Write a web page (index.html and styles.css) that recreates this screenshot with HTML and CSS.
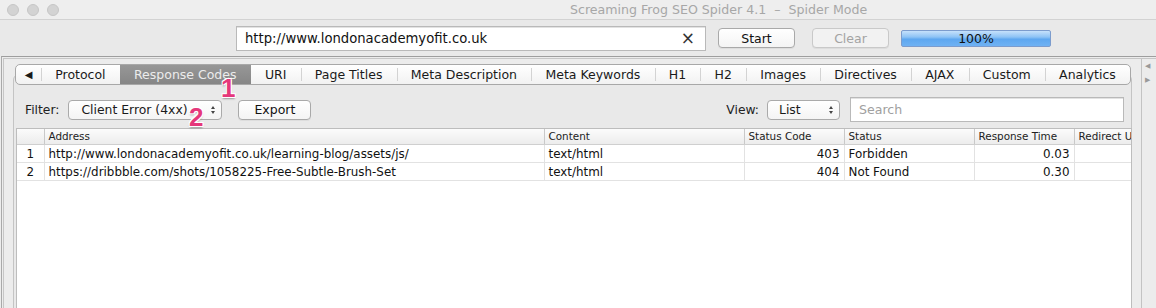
FILE: index.html
```html
<!DOCTYPE html>
<html>
<head>
<meta charset="utf-8">
<link rel="stylesheet" href="styles.css">
</head>
<body>
<div class="window">
  <div class="titlebar">
    <div class="lights">
      <span class="light"></span><span class="light"></span><span class="light"></span>
    </div>
    <div class="title">Screaming Frog SEO Spider 4.1 &nbsp;–&nbsp; Spider Mode</div>
  </div>
  <div class="toolbar">
    <div class="urlfield">
      <span class="url">http://www.londonacademyofit.co.uk</span>
      <span class="clearx">×</span>
    </div>
    <button class="btn start">Start</button>
    <button class="btn clear">Clear</button>
    <div class="progress">100%</div>
  </div>
  <div class="main">
    <div class="frame">
      <div class="content">
        <div class="tabbar">
          <div class="tab arrow">◀</div>
          <div class="tab">Protocol</div>
          <div class="tab selected">Response Codes</div>
          <div class="tab">URI</div>
          <div class="tab">Page Titles</div>
          <div class="tab">Meta Description</div>
          <div class="tab">Meta Keywords</div>
          <div class="tab">H1</div>
          <div class="tab">H2</div>
          <div class="tab">Images</div>
          <div class="tab">Directives</div>
          <div class="tab">AJAX</div>
          <div class="tab">Custom</div>
          <div class="tab">Analytics</div>
        </div>
        <div class="pane">
          <div class="filterrow">
            <span class="label">Filter:</span>
            <div class="select filter"><span>Client Error (4xx)</span><span class="updown"><i class="up"></i><i class="down"></i></span></div>
            <button class="btn export">Export</button>
            <div class="spacer"></div>
            <span class="label">View:</span>
            <div class="select view"><span>List</span><span class="updown"><i class="up"></i><i class="down"></i></span></div>
            <div class="search">Search</div>
          </div>
          <div class="tablewrap">
            <table class="grid">
              <colgroup>
                <col class="c-num"><col class="c-addr"><col class="c-content"><col class="c-code"><col class="c-status"><col class="c-time"><col class="c-redir">
              </colgroup>
              <thead>
                <tr><th></th><th>Address</th><th>Content</th><th>Status Code</th><th>Status</th><th>Response Time</th><th>Redirect URI</th></tr>
              </thead>
              <tbody>
                <tr><td class="num">1</td><td>http://www.londonacademyofit.co.uk/learning-blog/assets/js/</td><td>text/html</td><td class="right">403</td><td>Forbidden</td><td class="right">0.03</td><td></td></tr>
                <tr><td class="num">2</td><td>https://dribbble.com/shots/1058225-Free-Subtle-Brush-Set</td><td>text/html</td><td class="right">404</td><td>Not Found</td><td class="right">0.30</td><td></td></tr>
              </tbody>
            </table>
          </div>
        </div>
      </div>
      <div class="side">
        <span class="sarrow">◀</span>
        <span class="sarrow">▶</span>
      </div>
    </div>
  </div>
  <span class="badge b1">1</span>
  <span class="badge b2">2</span>
</div>
</body>
</html>
```
FILE: styles.css
```css
* { box-sizing: border-box; }
html, body { margin: 0; padding: 0; }
body {
  width: 1156px;
  height: 308px;
  overflow: hidden;
  background: #ececec;
  font-family: "DejaVu Sans", sans-serif;
  color: #1a1a1a;
}
.window { position: relative; width: 1156px; height: 308px; overflow: hidden; }

.titlebar {
  height: 20px;
  display: flex;
  align-items: center;
  background: #eeeeee;
  border-bottom: 1px solid #d2d2d2;
}
.lights { display: flex; gap: 8px; padding-left: 7px; width: 570px; }
.light {
  width: 12px; height: 12px; border-radius: 50%;
  background: #d3d3d3; border: 1px solid #c6c6c6;
}
.title { font-size: 12.6px; color: #a7a7a7; white-space: nowrap; }

.toolbar {
  height: 36px;
  display: flex;
  align-items: center;
  background: #e9e9e9;
}
.urlfield {
  margin-left: 236px;
  width: 470px; height: 25px;
  background: #fff;
  border: 1px solid #b9b9b9;
  box-shadow: inset 0 1px 0 #e2e2e2;
  display: flex; align-items: center; justify-content: space-between;
  padding: 0 10px 0 8px;
}
.url { font-size: 13.2px; color: #111; }
.clearx { font-size: 17px; color: #333; line-height: 1; }

.btn {
  font-family: "DejaVu Sans", sans-serif;
  font-size: 12.5px;
  height: 20px;
  padding: 0;
  border: 1px solid #a9a9a9;
  border-radius: 4px;
  background: linear-gradient(#ffffff, #f4f4f4);
  color: #111;
  box-shadow: 0 1px 0 rgba(0,0,0,0.05);
}
.start { margin-left: 12px; width: 77px; }
.clear { margin-left: 17px; width: 77px; color: #a3a3a3; border-color: #c9c9c9; background: #f2f2f2; }
.progress {
  margin-left: 12px;
  width: 150px; height: 17px;
  border: 1px solid #7c9ccd;
  border-radius: 2px;
  background: linear-gradient(#c6e1fb 0%, #8ec3f5 40%, #5ea7f0 55%, #6fb2f3 100%);
  font-size: 12.5px;
  display: flex; align-items: center; justify-content: center;
  color: #111;
}

.main {
  margin-left: 1px;
  height: 252px;
  border-top: 1px solid #9e9e9e;
  border-left: 1px solid #a9a9a9;
  padding-top: 1px;
  padding-left: 1px;
}
.frame {
  height: 100%;
  display: flex;
  border-top: 1px solid #c6c6c6;
  border-left: 1px solid #c6c6c6;
}
.content {
  width: 1137px;
  padding: 5px 9px 0 9px;
}
.side {
  flex: 1;
  border-left: 1px solid #c3c3c3;
  display: flex; flex-direction: column;
  padding-left: 3px;
  color: #9a9a9a;
  font-size: 7px;
  line-height: 14px;
}

.tabbar {
  position: relative;
  z-index: 1;
  margin: 0 1px 0 2px;
  height: 21px;
  display: flex;
  border: 1px solid #a8a8a8;
  border-radius: 5px;
  background: linear-gradient(#ffffff, #f2f2f2);
  overflow: hidden;
  margin-bottom: -11px;
}
.tab {
  flex: 1 1 auto;
  padding: 0 13px;
  font-size: 12.5px;
  display: flex; align-items: center; justify-content: center;
  white-space: nowrap;
  position: relative;
  color: #1a1a1a;
}
.tab + .tab::before {
  content: "";
  position: absolute;
  left: 0; top: 3px; bottom: 3px;
  border-left: 1px solid #d3d3d3;
}
.tab.arrow { flex: 0 0 25px; padding: 0; font-size: 10px; }
.tab.selected {
  background: linear-gradient(#979797, #868686);
  color: #ececec;
}
.tab.selected::before, .tab.selected + .tab::before { display: none; }

.pane {
  height: 250px;
  border: 1px solid #c4c4c4;
  border-radius: 6px;
  background: #e9e9e9;
  padding: 22px 0 0 1px;
}
.filterrow {
  height: 25px;
  display: flex;
  align-items: center;
  padding: 0 7px 0 10px;
}
.label { font-size: 12.3px; color: #222; }
.select {
  height: 20px;
  border: 1px solid #aaaaaa;
  border-radius: 4px;
  background: linear-gradient(#ffffff, #f4f4f4);
  display: flex; align-items: center; justify-content: space-between;
  font-size: 12.4px;
  padding: 0 6px 0 12px;
}
.filter { margin-left: 9px; width: 154px; }
.view { margin-left: 8px; width: 73px; padding-left: 11px; }
.updown { display: flex; flex-direction: column; gap: 2px; align-items: center; }
.updown i { display: block; width: 0; height: 0; border-left: 2.5px solid transparent; border-right: 2.5px solid transparent; }
.updown .up { border-bottom: 3px solid #444; }
.updown .down { border-top: 3px solid #444; }
.export { margin-left: 16px; width: 73px; }
.spacer { flex: 1; }
.search {
  margin-left: 10px;
  width: 274px; height: 25px;
  background: #fff;
  border: 1px solid #b9b9b9;
  box-shadow: inset 0 1px 0 #e2e2e2;
  font-size: 12.6px;
  color: #a0a0a0;
  display: flex; align-items: center;
  padding-left: 8px;
}

.tablewrap {
  margin-top: 6px;
  margin-left: 1px;
  width: 1116px;
  height: 200px;
  background: #fff;
  border: 1px solid #bdbdbd;
  overflow: hidden;
}
.grid {
  border-collapse: collapse;
  table-layout: fixed;
  width: 1130px;
}
.c-num { width: 27px; }
.c-addr { width: 500px; }
.c-content { width: 200px; }
.c-code { width: 100px; }
.c-status { width: 130px; }
.c-time { width: 100px; }
.c-redir { width: 73px; }
.grid th {
  height: 15px;
  font-weight: normal;
  font-size: 10.4px;
  text-align: left;
  padding: 0 0 0 4px;
  background: linear-gradient(#fbfbfb, #ececec);
  border-bottom: 1px solid #cfcfcf;
  border-left: 1px solid #c9c9c9;
  white-space: nowrap;
  overflow: hidden;
  color: #222;
}
.grid th:first-child { border-left: none; }
.grid td {
  height: 18px;
  font-size: 11.9px;
  padding: 1px 4px 0;
  border-bottom: 1px solid #e2e2e2;
  border-left: 1px solid #e2e2e2;
  white-space: nowrap;
  overflow: hidden;
  color: #111;
}
.grid td:first-child { border-left: none; }
.grid td.num { text-align: center; padding: 1px 0 0; }
.grid td.right { text-align: right; }

.badge {
  position: absolute;
  z-index: 10;
  font-family: "Liberation Sans", sans-serif;
  font-weight: bold;
  font-size: 26px;
  line-height: 1;
  color: #e5387b;
  text-shadow: -1px -1px 0 #fff, 1px -1px 0 #fff, -1px 1px 0 #fff, 1px 1px 0 #fff, 0 2px 2px rgba(0,0,0,0.35);
}
.b1 { left: 221px; top: 75px; }
.b2 { left: 189px; top: 104px; }
```
